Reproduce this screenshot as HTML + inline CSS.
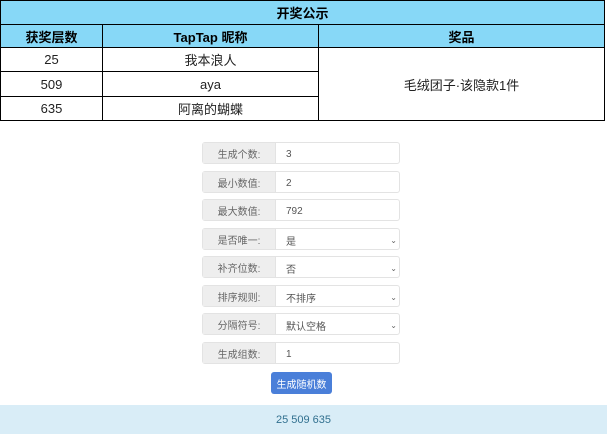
<!DOCTYPE html>
<html><head><meta charset="utf-8"><style>
body{margin:0;width:607px;height:434px;background:#fff;font-family:"Liberation Sans","Noto Sans CJK SC",sans-serif;position:relative;overflow:hidden}
table{position:absolute;left:0;top:0;width:605px;border-collapse:collapse;font-size:13px;color:#222}
td,th{border:1px solid #000;text-align:center;padding:0}
th{background:#87d8f7;font-weight:bold;font-size:13px;color:#000}
.r{position:absolute;left:202px;width:198px;height:22px;border:1px solid #e3e3e3;border-radius:3px;font-size:10px;color:#555;box-sizing:border-box}
.l,.v,.c{display:flex;align-items:center;height:20px;position:absolute;top:1px}
.l{left:0;top:0;width:72px;background:#eee;color:#666;justify-content:center;border-right:1px solid #e3e3e3}
.v{left:83px;color:#555}
.c{right:2px;font-size:8px;color:#666}
</style></head><body>
<table>
<tr style="height:24px"><th colspan="3">开奖公示</th></tr>
<tr style="height:23px"><th style="width:101px">获奖层数</th><th style="width:215px">TapTap 昵称</th><th>奖品</th></tr>
<tr style="height:24px"><td>25</td><td>我本浪人</td><td rowspan="3">毛绒团子·该隐款1件</td></tr>
<tr style="height:25px"><td>509</td><td>aya</td></tr>
<tr style="height:24px"><td>635</td><td>阿离的蝴蝶</td></tr>
</table>
<div class="r" style="top:142px"><div class="l">生成个数:</div><div class="v">3</div></div>
<div class="r" style="top:171px"><div class="l">最小数值:</div><div class="v">2</div></div>
<div class="r" style="top:199px"><div class="l">最大数值:</div><div class="v">792</div></div>
<div class="r" style="top:228px"><div class="l">是否唯一:</div><div class="v">是</div><div class="c">⌄</div></div>
<div class="r" style="top:256px"><div class="l">补齐位数:</div><div class="v">否</div><div class="c">⌄</div></div>
<div class="r" style="top:285px"><div class="l">排序规则:</div><div class="v">不排序</div><div class="c">⌄</div></div>
<div class="r" style="top:313px"><div class="l">分隔符号:</div><div class="v">默认空格</div><div class="c">⌄</div></div>
<div class="r" style="top:342px"><div class="l">生成组数:</div><div class="v">1</div></div>
<div style="position:absolute;left:271px;top:372px;width:61px;height:22px;background:#4a7fd9;border-radius:3px;color:#fff;font-size:10px;display:flex;align-items:center;justify-content:center">生成随机数</div>
<div style="position:absolute;left:0;top:405px;width:607px;height:29px;background:#d9edf7;color:#31708f;font-size:11px;display:flex;align-items:center;justify-content:center">25 509 635</div>
</body></html>
